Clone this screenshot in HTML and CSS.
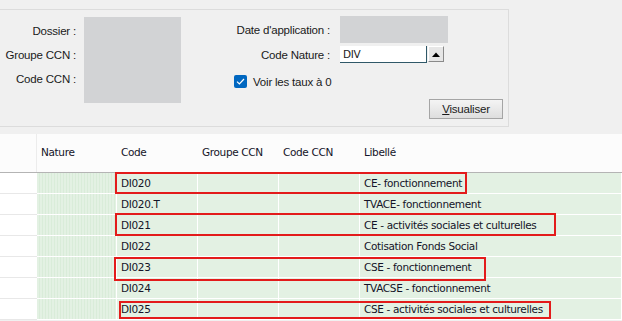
FILE: index.html
```html
<!DOCTYPE html>
<html lang="fr">

<head>
    <meta charset="UTF-8">
    <title>Taux par nature</title>
    <link rel="stylesheet" href="styles.css">
</head>

<body>

    <div class="panel">
        <div class="left-block">
            <div class="labels">
                <div>Dossier :</div>
                <div>Groupe CCN :</div>
                <div>Code CCN :</div>
            </div>
            <div class="gray-box big"></div>
        </div>

        <div class="right-block">
            <div class="field date-row">
                <label>Date d'application :</label>
                <div class="gray-box date"></div>
            </div>
            <div class="field nature-row">
                <label>Code Nature :</label>
                <div class="combo">
                    <div class="combo-input">DIV</div>
                    <div class="combo-btn">
                        <svg width="8" height="5" viewBox="0 0 8 5"><path d="M0 5 L4 0.5 L8 5 Z" fill="#000"/></svg>
                    </div>
                </div>
            </div>
            <div class="check-row">
                <span class="checkbox">
                    <svg width="9" height="7" viewBox="0 0 9 7"><path d="M1 3.6 L3.4 6 L8 1" stroke="#fff" stroke-width="1.2" fill="none"/></svg>
                </span>
                <span>Voir les taux à 0</span>
            </div>
            <div class="actions">
                <button class="btn"><u>V</u>isualiser</button>
            </div>
        </div>
    </div>

    <div class="grid-wrap">
        <div class="grid-head">
            <div class="cell first"></div>
            <div class="cell nature">Nature</div>
            <div class="cell code">Code</div>
            <div class="cell groupe">Groupe CCN</div>
            <div class="cell ccn">Code CCN</div>
            <div class="cell libelle">Libellé</div>
        </div>

        <div class="grid-body" id="rows"></div>

        <!-- annotations -->
        <div class="mark" style="left:115px; top:38px; width:352px; height:22px;"></div>
        <div class="mark" style="left:115px; top:79px; width:441px; height:23px;"></div>
        <div class="mark" style="left:114px; top:123px; width:372px; height:24px;"></div>
        <div class="mark" style="left:119px; top:167px; width:432px; height:18px;"></div>
    </div>

    <script>
        const rows = [
            ['DI020', 'CE- fonctionnement'],
            ['DI020.T', 'TVACE- fonctionnement'],
            ['DI021', 'CE - activités sociales et culturelles'],
            ['DI022', 'Cotisation Fonds Social'],
            ['DI023', 'CSE - fonctionnement'],
            ['DI024', 'TVACSE - fonctionnement'],
            ['DI025', 'CSE - activités sociales et culturelles']
        ];

        const body = document.getElementById('rows');
        rows.forEach(r => {
            const row = document.createElement('div');
            row.className = 'grid-row';
            row.innerHTML = `
                <div class="cell first"></div>
                <div class="cell nature"></div>
                <div class="cell code">${r[0]}</div>
                <div class="cell groupe"></div>
                <div class="cell ccn"></div>
                <div class="cell libelle">${r[1]}</div>`;
            body.appendChild(row);
        });
    </script>

</body>

</html>
```

FILE: styles.css
```css
* {
    margin: 0;
    padding: 0;
    box-sizing: border-box;
}

body {
    font-family: 'Liberation Sans', Arial, sans-serif;
    font-size: 12px;
    color: #1a1a1a;
    background-color: #f0f0f0;
    width: 622px;
    height: 321px;
    overflow: hidden;
}

/* Top filter panel */
.panel {
    margin-top: 9px;
    margin-left: -1px;
    width: 510px;
    height: 118px;
    border: 1px solid #dcdcdc;
    display: flex;
    font-size: 11.5px;
    letter-spacing: -0.2px;
}

.left-block {
    display: flex;
    gap: 8px;
}

.labels {
    width: 76px;
    padding-top: 9px;
}

.labels div {
    line-height: 24px;
    display: flex;
    justify-content: flex-end;
    white-space: nowrap;
}

.gray-box {
    background-color: #d2d3d5;
}

.gray-box.big {
    width: 97px;
    height: 86px;
    margin-top: 7px;
}

.right-block {
    width: 322px;
    display: flex;
    flex-direction: column;
}

.field {
    display: flex;
    align-items: center;
    gap: 10px;
}

.field label {
    width: 149px;
    text-align: right;
    white-space: nowrap;
}

.date-row {
    margin-top: 6px;
}

.gray-box.date {
    width: 108px;
    height: 27px;
}

.nature-row {
    margin-top: 3px;
    height: 17px;
}

.combo {
    display: flex;
    gap: 1px;
    height: 17px;
}

.combo-input {
    width: 87px;
    height: 17px;
    background: #fff;
    border-bottom: 1px solid #2f5868;
    border-right: 1px solid #2f5868;
    padding-left: 3px;
    line-height: 16px;
    font-family: 'DejaVu Sans', sans-serif;
    font-size: 10.5px;
    letter-spacing: -0.3px;
}

.combo-btn {
    width: 16px;
    height: 16px;
    background: #e6e6e6;
    border: 1px solid;
    border-color: #fff #8a8a8a #8a8a8a #fff;
    display: flex;
    align-items: center;
    justify-content: center;
}

.check-row {
    margin-top: 12px;
    padding-left: 53px;
    display: flex;
    align-items: center;
    gap: 6px;
    height: 13px;
}

.checkbox {
    width: 13px;
    height: 13px;
    border-radius: 2px;
    background-color: #0067c0;
    display: flex;
    align-items: center;
    justify-content: center;
}

.actions {
    margin-top: 11px;
    display: flex;
    justify-content: flex-end;
}

.btn {
    width: 74px;
    height: 20px;
    font-family: 'Liberation Sans', Arial, sans-serif;
    font-size: 11.5px;
    letter-spacing: -0.2px;
    color: #1a1a1a;
    border: 1px solid #a5a5a5;
    background: linear-gradient(#f4f4f4, #dedede);
    cursor: pointer;
}

/* Grid */
.grid-wrap {
    position: relative;
    margin-top: 7px;
    font-family: 'DejaVu Sans', sans-serif;
    font-size: 10.5px;
    letter-spacing: -0.35px;
    color: #141428;
}

.grid-head {
    display: flex;
    height: 39px;
    background: #fcfcfc;
    border-bottom: 1px solid #b4b4b4;
}

.grid-head .cell {
    line-height: 37px;
}

.grid-head .cell.first {
    border-right: 1px solid #ececec;
}

.cell {
    padding-left: 4px;
    white-space: nowrap;
    overflow: hidden;
}

.cell.first {
    width: 37px;
}

.cell.nature {
    width: 80px;
}

.cell.code,
.cell.groupe,
.cell.ccn {
    width: 81px;
}

.cell.libelle {
    flex: 1;
}

.grid-row {
    display: flex;
    height: 21px;
}

.grid-row .cell {
    line-height: 20px;
    background-color: #e3f1e3;
    border-right: 1px solid #fff;
    border-bottom: 1px solid #fff;
}

.grid-row .cell.first {
    background-color: #fff;
    border-right: none;
    border-bottom: 1px solid #e8e8e8;
}

.grid-row .cell.nature {
    background: repeating-linear-gradient(90deg, #e3f1e3 0 2px, #d9ecd9 2px 3px);
}

.mark {
    position: absolute;
    border: 2px solid #e31b1b;
}
```
